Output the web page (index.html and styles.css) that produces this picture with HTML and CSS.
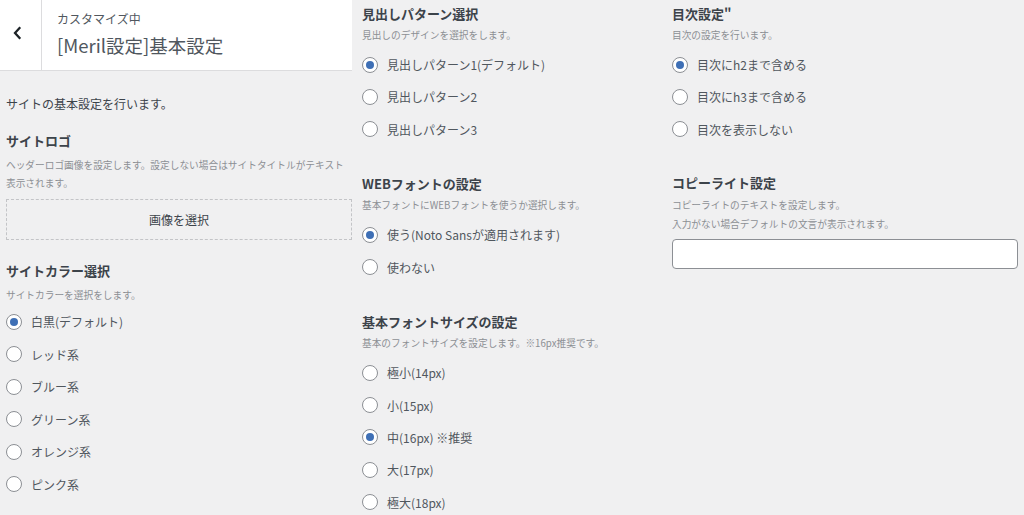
FILE: index.html
```html
<!DOCTYPE html>
<html lang="ja">
<head>
<meta charset="utf-8">
<title>カスタマイズ</title>
<link rel="stylesheet" href="styles.css">
</head>
<body>
<div class="page">
  <div class="col col-main">
    <div class="header">
      <div class="back">
        <svg width="10" height="14" viewBox="0 0 10 14"><path d="M7.5 2 L3 7 L7.5 12" fill="none" stroke="#1d2327" stroke-width="2.3" stroke-linecap="square"/></svg>
      </div>
      <div class="header-text">
        <div class="header-sub">カスタマイズ中</div>
        <div class="header-title">[Meril設定]基本設定</div>
      </div>
    </div>
    <div class="main-body">
      <p class="intro">サイトの基本設定を行います。</p>
      <div class="section first-main">
        <h3 class="title">サイトロゴ</h3>
        <p class="desc">ヘッダーロゴ画像を設定します。設定しない場合はサイトタイトルがテキスト表示されます。</p>
        <div class="upload">画像を選択</div>
      </div>
      <div class="section color-sec">
        <h3 class="title">サイトカラー選択</h3>
        <p class="desc">サイトカラーを選択をします。</p>
        <div class="radios">
          <label class="radio"><input type="radio" name="color" checked><span>白黒(デフォルト)</span></label>
          <label class="radio"><input type="radio" name="color"><span>レッド系</span></label>
          <label class="radio"><input type="radio" name="color"><span>ブルー系</span></label>
          <label class="radio"><input type="radio" name="color"><span>グリーン系</span></label>
          <label class="radio"><input type="radio" name="color"><span>オレンジ系</span></label>
          <label class="radio"><input type="radio" name="color"><span>ピンク系</span></label>
        </div>
      </div>
    </div>
  </div>

  <div class="col col-mid">
    <div class="section">
      <h3 class="title">見出しパターン選択</h3>
      <p class="desc">見出しのデザインを選択をします。</p>
      <div class="radios">
        <label class="radio"><input type="radio" name="head" checked><span>見出しパターン1(デフォルト)</span></label>
        <label class="radio"><input type="radio" name="head"><span>見出しパターン2</span></label>
        <label class="radio"><input type="radio" name="head"><span>見出しパターン3</span></label>
      </div>
    </div>
    <div class="section">
      <h3 class="title">WEBフォントの設定</h3>
      <p class="desc">基本フォントにWEBフォントを使うか選択します。</p>
      <div class="radios">
        <label class="radio"><input type="radio" name="web" checked><span>使う(Noto Sansが適用されます)</span></label>
        <label class="radio"><input type="radio" name="web"><span>使わない</span></label>
      </div>
    </div>
    <div class="section">
      <h3 class="title">基本フォントサイズの設定</h3>
      <p class="desc">基本のフォントサイズを設定します。※16px推奨です。</p>
      <div class="radios">
        <label class="radio"><input type="radio" name="size"><span>極小(14px)</span></label>
        <label class="radio"><input type="radio" name="size"><span>小(15px)</span></label>
        <label class="radio"><input type="radio" name="size" checked><span>中(16px) ※推奨</span></label>
        <label class="radio"><input type="radio" name="size"><span>大(17px)</span></label>
        <label class="radio"><input type="radio" name="size"><span>極大(18px)</span></label>
      </div>
    </div>
  </div>

  <div class="col col-right">
    <div class="section">
      <h3 class="title">目次設定"</h3>
      <p class="desc">目次の設定を行います。</p>
      <div class="radios">
        <label class="radio"><input type="radio" name="toc" checked><span>目次にh2まで含める</span></label>
        <label class="radio"><input type="radio" name="toc"><span>目次にh3まで含める</span></label>
        <label class="radio"><input type="radio" name="toc"><span>目次を表示しない</span></label>
      </div>
    </div>
    <div class="section copy-sec">
      <h3 class="title">コピーライト設定</h3>
      <p class="desc">コピーライトのテキストを設定します。<br>入力がない場合デフォルトの文言が表示されます。</p>
      <input class="text-input" type="text">
    </div>
  </div>
</div>
</body>
</html>
```

FILE: styles.css
```css
* { box-sizing: border-box; }
html, body {
  margin: 0;
  padding: 0;
  height: 515px;
  overflow: hidden;
  background: #f0f0f1;
}
body {
  font-family: "Noto Sans CJK JP", "Noto Sans", sans-serif;
  color: #50575e;
}
.page {
  display: flex;
  gap: 10px;
  padding-right: 6px;
  width: 1024px;
}
.col-main { width: 352px; flex: none; }
.col-mid { width: 300px; flex: none; padding-top: 4px; }
.col-right { flex: 1; padding-top: 4px; }

.header {
  display: flex;
  height: 71px;
  background: #fff;
  border-bottom: 1px solid #dcdcde;
}
.back {
  width: 42px;
  border-right: 1px solid #dcdcde;
  display: flex;
  align-items: center;
  justify-content: center;
  padding-right: 8px;
  padding-bottom: 4px;
}
.header-text {
  padding-left: 15px;
  padding-top: 10px;
}
.header-sub {
  font-size: 12px;
  line-height: 18px;
  color: #50575e;
}
.header-title {
  font-size: 18.5px;
  line-height: 28px;
  margin-top: 3px;
  color: #50575e;
  font-weight: 400;
}

.main-body { padding-left: 6px; }
.intro {
  margin: 23px 0 0;
  font-size: 12px;
  line-height: 20px;
  color: #3c434a;
}

.section { margin-top: 35px; }
.section:first-child { margin-top: 0; }
.main-body .section.first-main { margin-top: 17px; }
.main-body .section.color-sec { margin-top: 21px; }
.copy-sec { margin-top: 34px; }

.title {
  margin: 0;
  font-size: 13px;
  line-height: 20px;
  font-weight: 700;
  color: #3c434a;
}
.desc {
  margin: 2px 0 0;
  font-size: 9.7px;
  line-height: 19px;
  color: #8c8f94;
}
.main-body .desc {
  margin-top: 5px;
  line-height: 18px;
}
.copy-sec .desc { margin-top: 3px; }

.upload {
  margin-top: 7px;
  height: 41px;
  border: 1px dashed #c3c4c7;
  display: flex;
  align-items: center;
  justify-content: center;
  font-size: 12px;
  color: #3c434a;
}

.radios {
  display: flex;
  flex-direction: column;
  gap: 12.4px;
  margin-top: 9.5px;
}
.main-body .radios { margin-top: 7.5px; gap: 12.5px; }
.radio {
  display: flex;
  align-items: center;
  height: 20px;
  font-size: 12px;
  color: #50575e;
}
.radio input {
  -webkit-appearance: none;
  appearance: none;
  margin: 0 9px 0 0;
  width: 16px;
  height: 16px;
  border: 1px solid #8c8f94;
  border-radius: 50%;
  background: #fff;
  display: inline-flex;
  align-items: center;
  justify-content: center;
  flex: none;
}
.radio input:checked::before {
  content: "";
  width: 8px;
  height: 8px;
  border-radius: 50%;
  background: #3e6fb5;
}

.text-input {
  display: block;
  margin-top: 4.5px;
  width: 100%;
  height: 30px;
  background: #fff;
  border: 1px solid #8c8f94;
  border-radius: 4px;
}
```
